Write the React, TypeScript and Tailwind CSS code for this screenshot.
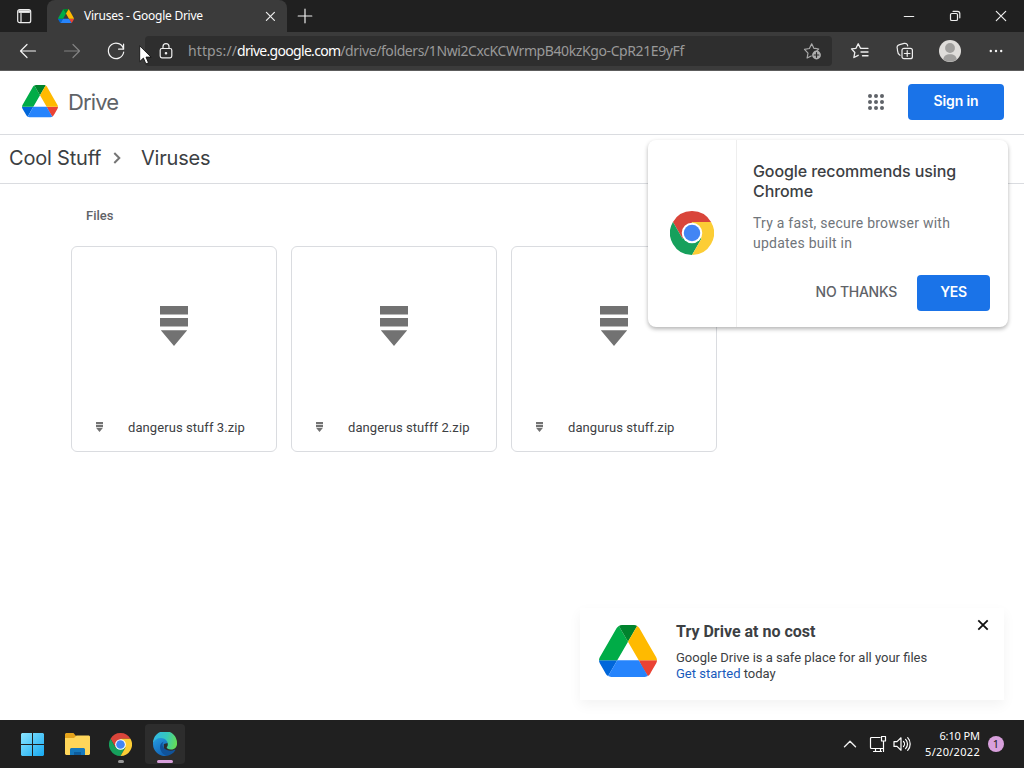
import type { ReactNode } from 'react';

const segoe = "font-['Noto_Sans','Open_Sans',sans-serif]";
const google = "font-['Inter','Roboto',sans-serif]";

const files = [
  { name: 'dangerus stuff 3.zip' },
  { name: 'dangerus stufff 2.zip' },
  { name: 'dangurus stuff.zip' },
];

function DriveLogo({ className }: { className: string }) {
  return (
    <svg viewBox="0 0 87.3 78" className={className}>
      <path fill="#0066da" d="m6.6 66.85 3.85 6.65c.8 1.4 1.95 2.5 3.3 3.3l13.75-23.8h-27.5c0 1.55.4 3.1 1.2 4.5z" />
      <path fill="#00ac47" d="m43.65 25-13.75-23.8c-1.35.8-2.5 1.9-3.3 3.3l-25.4 44a9.06 9.06 0 0 0 -1.2 4.5h27.5z" />
      <path fill="#ea4335" d="m73.55 76.8c1.35-.8 2.5-1.9 3.3-3.3l1.6-2.75 7.65-13.25c.8-1.4 1.2-2.95 1.2-4.5h-27.5l5.85 11.5z" />
      <path fill="#00832d" d="m43.65 25 13.75-23.8c-1.35-.8-2.9-1.2-4.5-1.2h-18.5c-1.6 0-3.15.45-4.5 1.2z" />
      <path fill="#2684fc" d="m59.8 53h-32.3l-13.75 23.8c1.35.8 2.9 1.2 4.5 1.2h50.8c1.6 0 3.15-.45 4.5-1.2z" />
      <path fill="#ffba00" d="m73.4 26.5-12.7-22c-.8-1.4-1.95-2.5-3.3-3.3l-13.75 23.8 16.15 28h27.45c0-1.55-.4-3.1-1.2-4.5z" />
    </svg>
  );
}

function ChromeLogo({ className }: { className: string }) {
  return (
    <svg viewBox="0 0 48 48" className={className}>
      <path fill="#d9453a" d="M24 24V12H44.785A24 24 0 0 0 3.215 12L13.608 30z" />
      <path fill="#16a05c" d="M24 24L13.608 30L3.215 12A24 24 0 0 0 24 48L34.392 30z" />
      <path fill="#fccd35" d="M24 24L34.392 30L24 48A24 24 0 0 0 44.785 12H24z" />
      <circle cx="24" cy="24" r="11.2" fill="#fff" />
      <circle cx="24" cy="24" r="9" fill="#4285f4" />
    </svg>
  );
}

function ArchiveIcon({ className }: { className: string }) {
  return (
    <svg viewBox="0 0 28 40" className={className} fill="#727272">
      <path d="M0 0h28v8.5H0zM0 12h28v8.5H0zM0.8 24.3h26.4L14 40z" />
    </svg>
  );
}

function LineIcon({ size = 'size-5', className = 'text-[#eeeeee]', children }: { size?: string; className?: string; children: ReactNode }) {
  return (
    <svg viewBox="0 0 20 20" className={`${size} ${className} shrink-0`} fill="none" stroke="currentColor" strokeWidth="1.2" strokeLinecap="round" strokeLinejoin="round">
      {children}
    </svg>
  );
}

function TitleBar() {
  return (
    <div className="flex h-8 bg-[#202020]">
      <div className="flex w-[47px] items-center justify-center">
        <LineIcon>
          <rect x="3.7" y="3.7" width="13" height="13" rx="2" />
          <path d="M4.5 5.6h11.4" strokeWidth="2.6" strokeLinecap="butt" />
          <path d="M7 7.5v9" />
        </LineIcon>
      </div>
      <div className="flex w-[240px] items-center rounded-t-lg bg-[#3b3b3b] pl-[11px]">
        <DriveLogo className="w-4 shrink-0" />
        <span className="ml-[10px] w-[178px] whitespace-nowrap text-xs tracking-[-0.25px] text-white">Viruses - Google Drive</span>
        <LineIcon size="size-4">
          <path d="M5.5 5.5l10 10M15.5 5.5l-10 10" strokeWidth="1.5" />
        </LineIcon>
      </div>
      <div className="flex w-[35px] items-center justify-center">
        <LineIcon><path d="M10 3.2v13.6M3.2 10h13.6" /></LineIcon>
      </div>
      <div className="ml-auto flex items-center">
        <div className="flex w-[46px] justify-center"><LineIcon><path d="M5.3 10.5h9.4" /></LineIcon></div>
        <div className="flex w-[46px] justify-center">
          <LineIcon>
            <rect x="5.5" y="7.5" width="7" height="7" rx="1.3" />
            <path d="M8 5.3h4.5a2.3 2.3 0 0 1 2.3 2.3v4.2" />
          </LineIcon>
        </div>
        <div className="flex w-[46px] justify-center"><LineIcon><path d="M5.3 5.3l9.4 9.4M14.7 5.3l-9.4 9.4" /></LineIcon></div>
      </div>
    </div>
  );
}

function Toolbar() {
  return (
    <div className="flex h-[39px] items-center border-b border-[#5c5c5c] bg-[#3b3b3b]">
      <div className="flex w-[145px] items-center gap-6 pl-[18px]">
        <LineIcon className="text-[#f4f4f4]"><path d="M17.5 10H2.5M9 3.5L2.5 10L9 16.5" /></LineIcon>
        <LineIcon className="text-[#828282]"><path d="M2.5 10h15M11 3.5l6.5 6.5l-6.5 6.5" /></LineIcon>
        <LineIcon className="text-[#f4f4f4]"><path d="M17.6 8.2A7.7 7.7 0 1 0 17.7 11M17.6 3.2v5h-5" /></LineIcon>
      </div>
      <div className="flex h-[30px] w-[687px] items-center rounded bg-[#2e2e2e] pl-[11px] pr-[9px]">
        <LineIcon>
          <rect x="4.2" y="7.5" width="11.6" height="9.3" rx="1.7" />
          <path d="M7 7.5V5.6a3 3 0 0 1 6 0v1.9" />
          <circle cx="10" cy="12.2" r="0.7" fill="currentColor" />
        </LineIcon>
        <div className="ml-3 flex-1 whitespace-nowrap text-sm text-[#999999]">
          <span className="tracking-[0.1px]">https://</span>
          <span className="tracking-[-0.7px] text-white">drive.google.com</span>
          <span className="tracking-[-0.4px]">/drive/folders/1Nwi2CxcKCWrmpB40kzKgo-CpR21E9yFf</span>
        </div>
        <LineIcon className="text-[#a9a9a9]">
          <path d="M12.3 7.3l3.4.7-1.7 1.7M8.2 15l-4.1 2 .9-4.9L1.5 8.3l4.9-.8 2.3-4.7 2.2 4.5 1.4.2" />
          <circle cx="13.5" cy="14" r="4.4" fill="#b0b0b0" stroke="none" />
          <path d="M13.5 11.7v4.6M11.2 14h4.6" stroke="#2e2e2e" />
        </LineIcon>
      </div>
      <div className="flex flex-1 items-center justify-between px-[18px]">
        <LineIcon>
          <path d="M11 7.2h-.5L8.2 2.8 6 7.3l-4.5.6 3.3 3.6-.9 5 4.3-2.2M11.5 7.3H18M11 11h7M12.5 14.7H18" strokeWidth="1.35" />
        </LineIcon>
        <LineIcon>
          <rect x="7" y="7.3" width="10.4" height="10.4" rx="2" />
          <path d="M12.2 9.7v5.6M9.4 12.5h5.6M5 14.3C2.2 12.8 2.7 10.8 2.4 8.2C1.5 5.5 2.4 4.3 4.7 3.6l4.4-1.2c2-.4 3.3.5 3.6 2.5" />
        </LineIcon>
        <svg viewBox="0 0 22 22" className="size-[22px]">
          <circle cx="11" cy="11" r="11" fill="#dfddda" />
          <circle cx="11" cy="8" r="4.9" fill="#a09f9d" />
          <path d="M4.2 19.5C4.7 15.8 7 14.2 11 14.2s6.3 1.6 6.8 5.3A11 11 0 0 1 4.2 19.5z" fill="#a09f9d" />
        </svg>
        <svg viewBox="0 0 20 20" className="size-5" fill="#f4f4f4">
          <circle cx="4.8" cy="10" r="1.2" /><circle cx="10" cy="10" r="1.2" /><circle cx="15.2" cy="10" r="1.2" />
        </svg>
      </div>
    </div>
  );
}

function DriveHeader() {
  return (
    <header className={`flex h-16 items-center border-b border-[#dadce0] pb-[2px] pl-[22px] pr-5 ${google}`}>
      <DriveLogo className="w-[36px]" />
      <span className="ml-[10px] mt-px text-[22px] tracking-[-0.9px] text-[#5f6368]">Drive</span>
      <svg viewBox="0 0 16 16" className="ml-auto mr-6 size-4" fill="#5f6368">
        {[2, 8, 14].map(y => [2, 8, 14].map(x => <circle key={`${x}-${y}`} cx={x} cy={y} r="2" />))}
      </svg>
      <button className="h-9 w-24 rounded bg-[#1a73e8] pb-px text-sm font-semibold tracking-[-0.1px] text-white">Sign in</button>
    </header>
  );
}

function FileCard({ name }: { name: string }) {
  return (
    <div className="flex h-[206px] w-[206px] flex-col rounded-md border border-[#dadce0]">
      <div className="flex flex-1 items-center justify-center">
        <ArchiveIcon className="mt-px h-10 w-7" />
      </div>
      <div className="flex h-12 items-center pl-6 pt-[2px]">
        <ArchiveIcon className="mt-[-2px] h-[10px] w-[7px]" />
        <span className="ml-[25px] whitespace-nowrap text-[13px] tracking-[0.08px] text-[#3c4043]">{name}</span>
      </div>
    </div>
  );
}

function ChromePromo() {
  return (
    <div className="absolute left-[648px] top-[140px] flex h-[187px] w-[360px] rounded-lg bg-white shadow-[0_2px_4px_rgba(0,0,0,0.3)]">
      <div className="flex w-[89px] items-center justify-center border-r border-[#eeeeee] pb-[2px]">
        <ChromeLogo className="size-11" />
      </div>
      <div className="flex flex-1 flex-col pl-4 pr-[18px] pt-[21px]">
        <h2 className={`whitespace-nowrap text-base leading-5 font-medium tracking-[-0.09px] text-[#3c4043] ${google}`}>
          Google recommends using<br />Chrome
        </h2>
        <p className="mt-3 whitespace-nowrap text-sm leading-5 tracking-[0.24px] text-[#70757a]">
          Try a fast, secure browser with<br />updates built in
        </p>
        <div className={`mt-[22px] flex items-center justify-end gap-5 text-sm ${google}`}>
          <button className="whitespace-nowrap pb-[2px] font-medium tracking-[-0.25px] text-[#5f6368]">NO THANKS</button>
          <button className="h-9 w-[73px] rounded bg-[#1a73e8] pb-[2px] font-semibold tracking-[-0.3px] text-white">YES</button>
        </div>
      </div>
    </div>
  );
}

function TryDriveToast() {
  return (
    <div className="absolute left-[580px] top-[608px] flex h-[92px] w-[424px] bg-white pl-[19px] pt-[17px] shadow-[0_5px_12px_rgba(0,0,0,0.05)]">
      <DriveLogo className="h-[52px] w-[58px]" />
      <div className="ml-[19px] flex-1 whitespace-nowrap text-[13px] leading-4 text-[#3c4043]">
        <h3 className="mb-[10px] mt-[-1px] text-base leading-4 font-bold">Try Drive at no cost</h3>
        <p>Google Drive is a safe place for all your files</p>
        <p><span className="text-[#185abc]">Get started</span> today</p>
      </div>
      <svg viewBox="0 0 12 12" className="mr-[15px] mt-[-6px] size-3" stroke="#111" strokeWidth="1.8">
        <path d="M1.3 1.3l9.4 9.4M10.7 1.3l-9.4 9.4" />
      </svg>
    </div>
  );
}

function EdgeLogo() {
  return (
    <svg viewBox="0 0 24 24" className="size-6">
      <defs>
        <linearGradient id="edge-top" x1="0" y1="0.3" x2="1" y2="0.5">
          <stop offset="0" stopColor="#31b7e8" />
          <stop offset="0.55" stopColor="#36c9bb" />
          <stop offset="1" stopColor="#65dc57" />
        </linearGradient>
        <linearGradient id="edge-left" x1="0" y1="0" x2="0.5" y2="1">
          <stop offset="0" stopColor="#279ee2" />
          <stop offset="1" stopColor="#1266b8" />
        </linearGradient>
      </defs>
      <path fill="url(#edge-left)" d="M0 11C1 7 5 5 9 5.5c4 .3 6 3 5.8 5.4l-4 1 0 8 2.6 4A12 12 0 0 1 0 12z" />
      <path fill="#10539b" d="M11 9.5C7 11 6 15 8 19c1.2 2.4 3 4 5.4 4.9 4-.4 7-2.6 8.9-5.7.2-.5-.2-.7-.7-.4-4.6 2.2-11 .4-12-4.2-.3-1.5.3-3.2 1.4-4.1z" />
      <path fill="url(#edge-top)" d="M0 11A12 12 0 0 1 24 11c.4 4-2.6 6.5-6.2 6.4-2.8 0-4.2-1.1-4.1-1.9.1-.6 1.2-1.1 1.1-3.3C14.7 8.8 11.7 6 8 6 4.2 6 1.4 8 0 11z" />
    </svg>
  );
}

function Taskbar() {
  return (
    <div className="flex h-12 items-center bg-[#202020] pl-[21px] pr-5">
      <svg viewBox="0 0 23 23" className="size-[23px]">
        <defs>
          <linearGradient id="win" x1="0" y1="0" x2="23" y2="23" gradientUnits="userSpaceOnUse">
            <stop stopColor="#8be5ff" /><stop offset="1" stopColor="#16a9f1" />
          </linearGradient>
        </defs>
        <path fill="url(#win)" d="M1 0h10v11H0V1zM12 0h10l1 1v10H12zM0 12h11v11H1l-1-1zM12 12h11v10l-1 1H12z" />
      </svg>
      <svg viewBox="0 0 25 22" className="ml-[21px] h-[22px] w-[25px]">
        <path fill="#e5a31b" d="M1 0h7.5L11 3v6H0V1z" />
        <path fill="#ffd65a" d="M0 5h9l2.5-2.5H24l1 1V21l-1 1H1l-1-1z" />
        <path fill="#1679bd" d="M5 22v-6l1-1h13l1 1v6z" />
        <path fill="#0e5d9d" d="M9 19h7v3H9z" />
      </svg>
      <div className="relative ml-[19px] flex h-10 w-[23px] items-center">
        <ChromeLogo className="size-[23px]" />
        <span className="absolute bottom-px left-[9px] h-[3px] w-1.5 rounded-full bg-[#969696]" />
      </div>
      <div className="relative ml-[13px] flex size-10 items-center justify-center rounded bg-[#2d2d2d]">
        <EdgeLogo />
        <span className="absolute bottom-px left-3 h-[3px] w-4 rounded-full bg-[#d8a0dc]" />
      </div>
      <div className="ml-auto flex items-center text-white">
        <LineIcon><path d="M4.5 12.7L10 7.3l5.5 5.4" strokeWidth="1.4" /></LineIcon>
        <LineIcon className="ml-2">
          <path d="M12 3.5H3.5a1 1 0 0 0-1 1v9a1 1 0 0 0 1 1h12M5.5 17.5h8M7.5 14.5v3M12.5 14.5v3M13.5 2.5h4v4.5h-4zM15.5 7v10.5" />
        </LineIcon>
        <LineIcon className="ml-1">
          <path d="M2 7.6h3l4-3.8v12.4l-4-3.8H2zM11.5 7.5c1.3 1.3 1.3 3.7 0 5M13.6 5.4c2.5 2.5 2.5 6.7 0 9.2M15.7 3.6c3.3 3.3 3.3 9.5 0 12.8" />
        </LineIcon>
        <div className="ml-[7px] w-[61px] whitespace-nowrap text-right text-[11px] leading-4">
          <p className="tracking-[-0.1px]">6:10 PM</p>
          <p className="tracking-[0.3px]">5/20/2022</p>
        </div>
        <span className="ml-2 flex size-4 items-center justify-center rounded-full bg-[#d8a0dc] text-[11px] text-[#202020]">1</span>
      </div>
    </div>
  );
}

export default function App() {
  return (
    <div className="relative flex h-[768px] w-[1024px] flex-col overflow-hidden bg-white font-['Roboto',sans-serif]">
      <div className={segoe}>
        <TitleBar />
        <Toolbar />
      </div>
      <main className="flex-1">
        <DriveHeader />
        <nav className={`flex h-[49px] items-center border-b border-[#dadce0] pb-[2px] pl-[9px] text-xl tracking-[-0.2px] text-[#3c4043] ${google}`}>
          <span className="w-[92px] whitespace-nowrap">Cool Stuff</span>
          <svg viewBox="0 0 8 12" className="mb-px ml-3 mr-5 h-3 w-2" fill="none" stroke="#757575" strokeWidth="2">
            <path d="M1.3 1l5 5-5 5" />
          </svg>
          <span>Viruses</span>
        </nav>
        <section className="pl-[71px] pt-[22px]">
          <h1 className="mb-5 pl-[15px] text-[13px] leading-5 font-medium text-[#5f6368]">Files</h1>
          <div className="flex gap-[14px]">
            {files.map(file => <FileCard key={file.name} {...file} />)}
          </div>
        </section>
      </main>
      <div className={segoe}>
        <Taskbar />
      </div>
      <ChromePromo />
      <TryDriveToast />
      {/* Mouse pointer */}
      <svg viewBox="0 0 13 20" className="absolute left-[139px] top-[45px] h-5 w-[13px]">
        <path d="M.7.8v15.8l3.7-3.5 2.5 5.8 2.6-1.1L7 12.1h5.1z" fill="#fff" stroke="#111" strokeWidth="0.9" />
      </svg>
    </div>
  );
}
